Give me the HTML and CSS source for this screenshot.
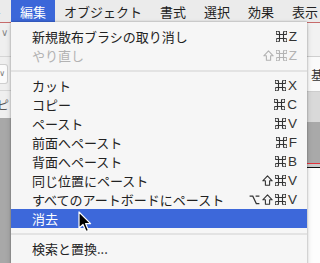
FILE: index.html
```html
<!DOCTYPE html>
<html lang="ja">
<head>
<meta charset="utf-8">
<link rel="stylesheet" href="styles.css">
</head>
<body>
<svg class="defs" width="0" height="0">
  <defs>
    <symbol id="cmd" viewBox="0 0 11 11">
      <path d="M3.5 3.5 V1.75 A1.75 1.75 0 1 0 1.75 3.5 H9.25 A1.75 1.75 0 1 0 7.5 1.75 V9.25 A1.75 1.75 0 1 0 9.25 7.5 H1.75 A1.75 1.75 0 1 0 3.5 9.25 Z" fill="none" stroke="currentColor" stroke-width="1.1"/>
    </symbol>
    <symbol id="shift" viewBox="0 0 11 11">
      <path d="M5.5 0.9 L10.2 5.8 H7.6 V10.2 H3.4 V5.8 H0.8 Z" fill="none" stroke="currentColor" stroke-width="1.1" stroke-linejoin="round"/>
    </symbol>
    <symbol id="opt" viewBox="0 0 11 11">
      <path d="M0.6 2.2 H3.8 L7.3 9.6 H10.4 M6.6 2.2 H10.4" fill="none" stroke="currentColor" stroke-width="1.2"/>
    </symbol>
  </defs>
</svg>
<div class="menubar">
  <span class="mb-item mb-first">ト</span>
  <span class="mb-item mb-active">編集</span>
  <span class="mb-item">オブジェクト</span>
  <span class="mb-item">書式</span>
  <span class="mb-item">選択</span>
  <span class="mb-item">効果</span>
  <span class="mb-item">表示</span>
</div>
<div class="desk">
  <div class="strip strip-left">
    <div class="band band-top"><span class="chev">∨</span></div>
    <div class="band band-box"><span class="boxed">∨</span></div>
    <div class="band band-text"><span class="frag">ピ</span></div>
    <div class="band band-dark grow"></div>
  </div>
  <div class="spacer"></div>
  <div class="strip strip-right">
    <div class="band band-top-r"></div>
    <div class="band band-white"><span class="sq"></span><span class="frag-r">基</span></div>
    <div class="band band-mid"></div>
    <div class="band band-dark2"></div>
    <div class="band band-red"></div>
    <div class="band band-grey"></div>
    <div class="band band-black"></div>
    <div class="band band-paper grow"></div>
  </div>
</div>

<div class="menu">
  <div class="row"><span class="label">新規散布ブラシの取り消し</span><span class="key"><svg class="sym"><use href="#cmd"/></svg>Z</span></div>
  <div class="row disabled"><span class="label">やり直し</span><span class="key"><svg class="sym"><use href="#shift"/></svg><svg class="sym"><use href="#cmd"/></svg>Z</span></div>
  <div class="sep"></div>
  <div class="row"><span class="label">カット</span><span class="key"><svg class="sym"><use href="#cmd"/></svg>X</span></div>
  <div class="row"><span class="label">コピー</span><span class="key"><svg class="sym"><use href="#cmd"/></svg>C</span></div>
  <div class="row"><span class="label">ペースト</span><span class="key"><svg class="sym"><use href="#cmd"/></svg>V</span></div>
  <div class="row"><span class="label">前面へペースト</span><span class="key"><svg class="sym"><use href="#cmd"/></svg>F</span></div>
  <div class="row"><span class="label">背面へペースト</span><span class="key"><svg class="sym"><use href="#cmd"/></svg>B</span></div>
  <div class="row"><span class="label">同じ位置にペースト</span><span class="key"><svg class="sym"><use href="#shift"/></svg><svg class="sym"><use href="#cmd"/></svg>V</span></div>
  <div class="row"><span class="label">すべてのアートボードにペースト</span><span class="key"><svg class="sym"><use href="#opt"/></svg><svg class="sym"><use href="#shift"/></svg><svg class="sym"><use href="#cmd"/></svg>V</span></div>
  <div class="row selected"><span class="label">消去</span><span class="key"></span></div>
  <div class="sep"></div>
  <div class="row"><span class="label">検索と置換...</span><span class="key"></span></div>
</div>

<svg class="cursor" width="14" height="22" viewBox="0 0 14 22">
  <path d="M1 1 L1 17 L5 13.5 L8 20.5 L10.5 19.5 L7.6 12.6 L12.6 12.6 Z" fill="#000" stroke="#fff" stroke-width="1.2" stroke-linejoin="round"/>
</svg>
</body>
</html>
```
FILE: styles.css
```css
html, body {
  margin: 0;
  padding: 0;
}
body {
  width: 320px;
  height: 263px;
  overflow: hidden;
  position: relative;
  background: #f0f0f0;
  font-family: "Noto Sans CJK JP", "Liberation Sans", sans-serif;
  color: #222;
}
.defs {
  position: absolute;
  width: 0;
  height: 0;
}
.menubar {
  height: 22px;
  display: flex;
  align-items: stretch;
  background: #ebebeb;
  border-bottom: 1px solid #c76b6b;
  white-space: nowrap;
  font-size: 13px;
  overflow: hidden;
}
.mb-item {
  padding: 0 9px;
  display: flex;
  align-items: center;
  color: #222;
  line-height: 1;
}
.mb-first {
  margin-left: -20px;
}
.mb-active {
  background: #3b67d9;
  color: #fff;
}
.desk {
  display: flex;
  height: 240px;
}
.strip {
  display: flex;
  flex-direction: column;
}
.strip-left {
  width: 11px;
  background: #efefef;
}
.strip-right {
  width: 13px;
}
.spacer {
  flex: 1;
}
.band {
  flex: none;
  overflow: hidden;
  position: relative;
}
.grow {
  flex: 1;
}
.band-top {
  height: 34px;
  border-bottom: 1px solid #d6d6d6;
  display: flex;
  align-items: flex-start;
  padding-top: 5px;
  box-sizing: border-box;
}
.chev {
  font-size: 10px;
  color: #888;
  margin-left: 1px;
  line-height: 1;
  font-family: "DejaVu Sans", sans-serif;
}
.band-box {
  height: 34px;
  display: flex;
  align-items: center;
  border-bottom: 1px solid #d6d6d6;
  box-sizing: border-box;
}
.boxed {
  width: 10px;
  height: 20px;
  margin-left: -2px;
  border: 1px solid #cfcfcf;
  border-left: none;
  border-radius: 0 3px 3px 0;
  background: #fbfbfb;
  font-size: 8px;
  color: #777;
  display: flex;
  align-items: center;
  justify-content: flex-end;
  padding-right: 2px;
  box-sizing: border-box;
  font-family: "DejaVu Sans", sans-serif;
}
.band-text {
  height: 27px;
  display: flex;
  align-items: center;
}
.frag {
  font-size: 12px;
  color: #555;
  margin-left: -3px;
}
.band-dark {
  background: #a8a8a8;
}
.band-top-r {
  height: 34px;
  background: #f2f2f2;
  border-bottom: 1px solid #cfcfcf;
  box-sizing: border-box;
}
.band-white {
  height: 35px;
  background: #fafafa;
  border-bottom: 1px solid #cdcdcd;
  box-sizing: border-box;
  display: flex;
  align-items: center;
}
.sq {
  width: 3px;
  height: 3px;
  background: #111;
  margin-left: 1px;
}
.frag-r {
  font-size: 12px;
  color: #333;
  margin-left: 3px;
}
.band-mid {
  height: 30px;
  background: #d9d9d9;
}
.band-dark2 {
  height: 41px;
  background: #a9a9a9;
}
.band-red {
  height: 1px;
  background: #e2323c;
}
.band-grey {
  height: 3px;
  background: #c8c8c8;
}
.band-black {
  height: 1px;
  background: #111;
}
.band-paper {
  background: #fdfdfd;
}
.menu {
  position: absolute;
  left: 11px;
  top: 22px;
  width: 296px;
  height: 250px;
  background: #f6f6f6;
  box-shadow: 0 0 2px rgba(0,0,0,0.35), 0 2px 6px rgba(0,0,0,0.15);
  padding-top: 5px;
  box-sizing: border-box;
  font-size: 13px;
}
.row {
  height: 19px;
  display: flex;
  align-items: center;
  justify-content: space-between;
  padding: 0 10px 0 21px;
  color: #222;
  white-space: nowrap;
}
.label {
  line-height: 1;
}
.key {
  font-family: "Liberation Sans", sans-serif;
  font-size: 13.5px;
  color: #333;
  line-height: 1;
  display: flex;
  align-items: center;
}
.sym {
  width: 11px;
  height: 11px;
  margin-right: 2px;
  flex: none;
}
.disabled .label,
.disabled .key {
  color: #b3b3b3;
}
.selected {
  background: #3d68da;
}
.selected .label {
  color: #fff;
}
.sep {
  height: 11px;
  display: flex;
  align-items: center;
}
.sep::after {
  content: "";
  flex: 1;
  height: 2px;
  background: #e3e3e3;
}
.cursor {
  position: absolute;
  left: 78px;
  top: 211px;
}
```
